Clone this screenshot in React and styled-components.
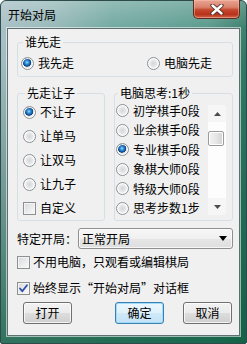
import styled, { createGlobalStyle } from "styled-components";

const GlobalStyle = createGlobalStyle`
  html, body {
    margin: 0;
    padding: 0;
    background: #ffffff;
  }
  body {
    font-family: "Noto Sans CJK SC", "DejaVu Sans", sans-serif;
    font-size: 12px;
    color: #000;
  }
`;

function Radio({ checked }) {
  return <RadioDot $checked={checked} />;
}

function Check({ checked }) {
  return (
    <CheckBox>
      {checked && (
        <svg width="11" height="11" viewBox="0 0 11 11">
          <path
            d="M2 5.5 L4.3 8.2 L9 2.2"
            fill="none"
            stroke="#2a4fa8"
            strokeWidth="1.8"
            strokeLinecap="round"
            strokeLinejoin="round"
          />
        </svg>
      )}
    </CheckBox>
  );
}

const handicaps = ["不让子", "让单马", "让双马", "让九子"];
const levels = [
  "初学棋手0段",
  "业余棋手0段",
  "专业棋手0段",
  "象棋大师0段",
  "特级大师0段",
  "思考步数1步",
];

function App() {
  return (
    <>
      <GlobalStyle />
      <Window>
        <TitleBar>
          <Title>开始对局</Title>
          <CloseBtn>
            <svg width="14" height="11" viewBox="0 0 14 11">
              <path
                d="M2.5 1.5 L11.5 9.5 M11.5 1.5 L2.5 9.5"
                stroke="#4a2a22"
                strokeWidth="4.2"
                strokeLinecap="round"
              />
              <path
                d="M2.5 1.5 L11.5 9.5 M11.5 1.5 L2.5 9.5"
                stroke="#ffffff"
                strokeWidth="2.4"
                strokeLinecap="round"
              />
            </svg>
          </CloseBtn>
        </TitleBar>
        <Client>
          <Group $pad={3}>
            <Legend>谁先走</Legend>
            <SideRow>
              <Option $width={126}>
                <Radio checked />
                我先走
              </Option>
              <Option>
                <Radio />
                电脑先走
              </Option>
            </SideRow>
          </Group>

          <Columns>
            <Group $pad={5} $width={88} $flat>
              <Legend>先走让子</Legend>
              {handicaps.map((h, i) => (
                <Option key={h} $h={24}>
                  <Radio checked={i === 0} />
                  {h}
                </Option>
              ))}
              <Option $h={24}>
                <Check />
                自定义
              </Option>
            </Group>

            <Group $pad={1} $width={119} $flat>
              <Legend>电脑思考:1秒</Legend>
              <ListBox>
                <ListItems>
                  {levels.map((l, i) => (
                    <Option key={l} $h={19.5}>
                      <Radio checked={i === 2} />
                      {l}
                    </Option>
                  ))}
                </ListItems>
                <ScrollBar>
                  <ScrollArrow>
                    <svg width="7" height="4" viewBox="0 0 7 4">
                      <path d="M0 4 L3.5 0 L7 4 Z" fill="#4d4d4d" />
                    </svg>
                  </ScrollArrow>
                  <Track>
                    <Thumb />
                  </Track>
                  <ScrollArrow>
                    <svg width="7" height="4" viewBox="0 0 7 4">
                      <path d="M0 0 L7 0 L3.5 4 Z" fill="#4d4d4d" />
                    </svg>
                  </ScrollArrow>
                </ScrollBar>
              </ListBox>
            </Group>
          </Columns>

          <ComboRow>
            <span>特定开局：</span>
            <Combo>
              <span>正常开局</span>
              <svg width="8" height="5" viewBox="0 0 8 5">
                <path d="M0 0 L8 0 L4 5 Z" fill="#000" />
              </svg>
            </Combo>
          </ComboRow>

          <CheckRow $top={6}>
            <Check />
            不用电脑，只观看或编辑棋局
          </CheckRow>
          <CheckRow $top={12}>
            <Check checked />
            始终显示“开始对局”对话框
          </CheckRow>

          <ButtonRow>
            <Button>打开</Button>
            <Button $gap={43} $default>
              确定
            </Button>
            <Button $gap={19}>取消</Button>
          </ButtonRow>
        </Client>
      </Window>
    </>
  );
}

const Window = styled.div`
  width: 247px;
  height: 344px;
  box-sizing: border-box;
  display: flex;
  flex-direction: column;
  border: 1px solid #2c4b4a;
  border-radius: 6px 6px 2px 2px;
  background: linear-gradient(
      180deg,
      rgba(255, 255, 255, 0.28) 0px,
      rgba(255, 255, 255, 0.08) 26px,
      rgba(0, 0, 0, 0) 60px,
      rgba(10, 80, 55, 0.35) 200px,
      rgba(10, 90, 60, 0.75) 100%
    ),
    linear-gradient(
      90deg,
      #a3bcc2 0%,
      #8fb4b3 22%,
      #6aa39c 45%,
      #5c9c92 65%,
      #4f9384 85%,
      #2f7763 100%
    );
`;

const TitleBar = styled.div`
  height: 27px;
  display: flex;
  justify-content: space-between;
  align-items: flex-start;
  padding: 0 6px 0 7px;
`;

const Title = styled.div`
  margin-top: 7px;
  font-size: 12px;
  line-height: 14px;
  color: #000;
`;

const CloseBtn = styled.div`
  width: 47px;
  height: 19px;
  box-sizing: border-box;
  margin-top: -1px;
  display: flex;
  align-items: center;
  justify-content: center;
  border: 1px solid #5b2a22;
  border-top: none;
  border-radius: 0 0 5px 5px;
  background: linear-gradient(
    180deg,
    #e8a594 0%,
    #d9826c 40%,
    #c4462c 55%,
    #b8321b 80%,
    #d0674c 100%
  );
  box-shadow: inset 0 0 0 1px rgba(255, 200, 180, 0.45);
`;

const Client = styled.div`
  height: 308px;
  margin: 0 6px 0 6px;
  box-sizing: border-box;
  display: flex;
  flex-direction: column;
  padding: 6px 6px 0 9px;
  background: #f0f0f0;
  border: 1px solid #5f6f70;
  box-shadow: 0 0 0 1px rgba(255, 255, 255, 0.55);
`;

const Group = styled.fieldset`
  margin: 0;
  min-width: 0;
  box-sizing: border-box;
  width: ${(p) => (p.$width ? `${p.$width}px` : "auto")};
  padding: ${(p) => (p.$flat ? "0" : "7px")} 0 ${(p) => (p.$flat ? "0" : "6px")}
    ${(p) => p.$pad}px;
  border: 1px solid #d5dfe5;
  border-radius: 3px;
  display: flex;
  flex-direction: column;
`;

const Legend = styled.legend`
  margin-left: 2px;
  padding: 0 2px;
  font-size: 12px;
  line-height: 14px;
`;

const SideRow = styled.div`
  display: flex;
  align-items: center;
`;

const Option = styled.label`
  display: flex;
  align-items: center;
  gap: 4px;
  height: ${(p) => (p.$h ? `${p.$h}px` : "14px")};
  width: ${(p) => (p.$width ? `${p.$width}px` : "auto")};
  font-size: 12px;
  line-height: 14px;
  white-space: nowrap;
`;

const RadioDot = styled.span`
  flex: none;
  width: 13px;
  height: 13px;
  box-sizing: border-box;
  border-radius: 50%;
  border: 1px solid #8d9092;
  background: ${(p) =>
    p.$checked
      ? "radial-gradient(circle at 45% 40%, #9fe0ff 0px, #3b9be0 1.5px, #1a63b0 3px, #0f3f7a 4px, #dfe3e6 4.6px, #f4f4f4 100%)"
      : "radial-gradient(circle at 50% 50%, #d4d7da 0px, #e4e6e8 3px, #f6f6f6 5px, #e9eaeb 100%)"};
  box-shadow: inset 0 0 0 1px #ffffff;
`;

const CheckBox = styled.span`
  flex: none;
  width: 13px;
  height: 13px;
  box-sizing: border-box;
  border: 1px solid #8e8f8f;
  display: flex;
  align-items: center;
  justify-content: center;
  background: linear-gradient(135deg, #d6d8da 0%, #e9eaeb 50%, #fbfbfb 100%);
  box-shadow: inset 0 0 0 1px #f4f4f4;
`;

const Columns = styled.div`
  display: flex;
  gap: 9px;
  margin-top: 9px;
  height: 135px;
`;

const ListBox = styled.div`
  display: flex;
  flex: 1;
  padding: 1px 6px 2px 0;
`;

const ListItems = styled.div`
  flex: 1;
  display: flex;
  flex-direction: column;
`;

const ScrollBar = styled.div`
  width: 18px;
  margin: 4px 0 3px;
  display: flex;
  flex-direction: column;
  background: #fbfbfb;
`;

const ScrollArrow = styled.div`
  height: 17px;
  display: flex;
  align-items: center;
  justify-content: center;
  background: #f6f6f6;
`;

const Track = styled.div`
  flex: 1;
  background: #fdfdfd;
  padding-top: 9px;
`;

const Thumb = styled.div`
  width: 16px;
  height: 15px;
  box-sizing: border-box;
  border: 1px solid #9b9b9b;
  border-radius: 2px;
  background: linear-gradient(90deg, #f3f3f3 0%, #e6e6e6 50%, #d2d2d2 100%);
  box-shadow: inset 0 0 0 1px #ffffff;
`;

const ComboRow = styled.div`
  display: flex;
  align-items: center;
  margin-top: 7px;
  height: 21px;
  font-size: 12px;
  line-height: 14px;
`;

const Combo = styled.div`
  margin-left: 1px;
  width: 155px;
  height: 21px;
  box-sizing: border-box;
  display: flex;
  align-items: center;
  justify-content: space-between;
  padding: 0 5px 0 3px;
  border: 1px solid #8e8f8f;
  border-radius: 3px;
  background: linear-gradient(
    180deg,
    #f7f7f7 0%,
    #f0f0f0 50%,
    #e6e6e6 51%,
    #dedede 100%
  );
  box-shadow: inset 0 0 0 1px rgba(255, 255, 255, 0.7);
`;

const CheckRow = styled.label`
  display: flex;
  align-items: center;
  gap: 3px;
  height: 14px;
  margin-top: ${(p) => p.$top}px;
  font-size: 12px;
  line-height: 14px;
  white-space: nowrap;
`;

const ButtonRow = styled.div`
  display: flex;
  margin-top: 7px;
  padding-left: 6px;
`;

const Button = styled.button`
  width: 49px;
  height: 22px;
  margin: 0 0 0 ${(p) => p.$gap || 0}px;
  padding: 0;
  box-sizing: border-box;
  font-family: "Noto Sans CJK SC", "DejaVu Sans", sans-serif;
  font-size: 12px;
  line-height: 14px;
  color: #000;
  border: 1px solid ${(p) => (p.$default ? "#3c7fb1" : "#707070")};
  border-radius: 3px;
  background: ${(p) =>
    p.$default
      ? "linear-gradient(180deg, #eaf6fd 0%, #e0f1fb 50%, #d0e9f8 51%, #c3e2f5 100%)"
      : "linear-gradient(180deg, #f2f2f2 0%, #ebebeb 50%, #dddddd 51%, #cfcfcf 100%)"};
  box-shadow: inset 0 0 0 1px
    ${(p) => (p.$default ? "#9fdcfb" : "rgba(255,255,255,0.75)")};
`;

export default App;
